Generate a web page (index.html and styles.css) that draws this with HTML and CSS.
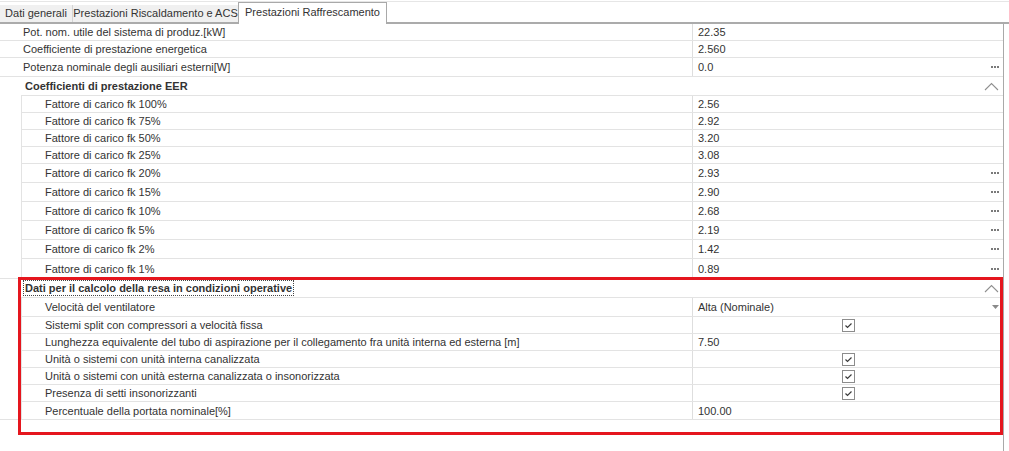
FILE: index.html
```html
<!DOCTYPE html>
<html lang="it">
<head>
    <meta charset="UTF-8">
    <title>Prestazioni Raffrescamento</title>
    <link rel="stylesheet" href="styles.css">
</head>
<body>

<div class="topline"></div>
<div class="tabs">
    <div class="tab tab-general">Dati generali</div>
    <div class="tab tab-heat">Prestazioni Riscaldamento e ACS</div>
    <div class="tab active">Prestazioni Raffrescamento</div>
</div>

<div class="grid">
    <div class="row"><div class="name">Pot. nom. utile del sistema di produz.[kW]</div><div class="value">22.35</div></div>
    <div class="row"><div class="name">Coefficiente di prestazione energetica</div><div class="value">2.560</div></div>
    <div class="row tall"><div class="name">Potenza nominale degli ausiliari esterni[W]</div><div class="value">0.0<svg class="dots" width="8" height="2"><rect x="0" y="0" width="2" height="2"/><rect x="3" y="0" width="2" height="2"/><rect x="6" y="0" width="2" height="2"/></svg></div></div>

    <div class="cat">
        <div class="cat-head">
            <span>Coefficienti di prestazione EER</span>
            <svg class="chevron" width="15" height="9" viewBox="0 0 15 9"><polyline points="1,8 7.5,1.5 14,8"/></svg>
        </div>
        <div class="cat-body">
            <div class="row"><div class="name">Fattore di carico fk 100%</div><div class="value">2.56</div></div>
            <div class="row"><div class="name">Fattore di carico fk 75%</div><div class="value">2.92</div></div>
            <div class="row"><div class="name">Fattore di carico fk 50%</div><div class="value">3.20</div></div>
            <div class="row"><div class="name">Fattore di carico fk 25%</div><div class="value">3.08</div></div>
            <div class="row tall"><div class="name">Fattore di carico fk 20%</div><div class="value">2.93<svg class="dots" width="8" height="2"><rect x="0" y="0" width="2" height="2"/><rect x="3" y="0" width="2" height="2"/><rect x="6" y="0" width="2" height="2"/></svg></div></div>
            <div class="row tall"><div class="name">Fattore di carico fk 15%</div><div class="value">2.90<svg class="dots" width="8" height="2"><rect x="0" y="0" width="2" height="2"/><rect x="3" y="0" width="2" height="2"/><rect x="6" y="0" width="2" height="2"/></svg></div></div>
            <div class="row tall"><div class="name">Fattore di carico fk 10%</div><div class="value">2.68<svg class="dots" width="8" height="2"><rect x="0" y="0" width="2" height="2"/><rect x="3" y="0" width="2" height="2"/><rect x="6" y="0" width="2" height="2"/></svg></div></div>
            <div class="row tall"><div class="name">Fattore di carico fk 5%</div><div class="value">2.19<svg class="dots" width="8" height="2"><rect x="0" y="0" width="2" height="2"/><rect x="3" y="0" width="2" height="2"/><rect x="6" y="0" width="2" height="2"/></svg></div></div>
            <div class="row tall"><div class="name">Fattore di carico fk 2%</div><div class="value">1.42<svg class="dots" width="8" height="2"><rect x="0" y="0" width="2" height="2"/><rect x="3" y="0" width="2" height="2"/><rect x="6" y="0" width="2" height="2"/></svg></div></div>
            <div class="row tall"><div class="name">Fattore di carico fk 1%</div><div class="value">0.89<svg class="dots" width="8" height="2"><rect x="0" y="0" width="2" height="2"/><rect x="3" y="0" width="2" height="2"/><rect x="6" y="0" width="2" height="2"/></svg></div></div>
        </div>
    </div>

    <div class="cat">
        <div class="cat-head">
            <span class="focus">Dati per il calcolo della resa in condizioni operative</span>
            <svg class="chevron" width="15" height="9" viewBox="0 0 15 9"><polyline points="1,8 7.5,1.5 14,8"/></svg>
        </div>
        <div class="cat-body">
            <div class="row tall"><div class="name">Velocità del ventilatore</div><div class="value">Alta (Nominale)<svg class="drop" width="7" height="4" viewBox="0 0 7 4"><polygon points="0,0 7,0 3.5,4"/></svg></div></div>
            <div class="row"><div class="name">Sistemi split con compressori a velocità fissa</div><div class="value center"><svg class="check" width="13" height="13" viewBox="0 0 13 13"><rect x="0.5" y="0.5" width="12" height="12"/><polyline points="3.5,6.5 5.5,8.5 9.5,4.5"/></svg></div></div>
            <div class="row"><div class="name">Lunghezza equivalente del tubo di aspirazione per il collegamento fra unità interna ed esterna [m]</div><div class="value">7.50</div></div>
            <div class="row"><div class="name">Unità o sistemi con unità interna canalizzata</div><div class="value center"><svg class="check" width="13" height="13" viewBox="0 0 13 13"><rect x="0.5" y="0.5" width="12" height="12"/><polyline points="3.5,6.5 5.5,8.5 9.5,4.5"/></svg></div></div>
            <div class="row"><div class="name">Unità o sistemi con unità esterna canalizzata o insonorizzata</div><div class="value center"><svg class="check" width="13" height="13" viewBox="0 0 13 13"><rect x="0.5" y="0.5" width="12" height="12"/><polyline points="3.5,6.5 5.5,8.5 9.5,4.5"/></svg></div></div>
            <div class="row"><div class="name">Presenza di setti insonorizzanti</div><div class="value center"><svg class="check" width="13" height="13" viewBox="0 0 13 13"><rect x="0.5" y="0.5" width="12" height="12"/><polyline points="3.5,6.5 5.5,8.5 9.5,4.5"/></svg></div></div>
            <div class="row"><div class="name">Percentuale della portata nominale[%]</div><div class="value">100.00</div></div>
        </div>
    </div>
</div>

<!-- riquadro rosso di evidenziazione -->
<div class="highlight"></div>

</body>
</html>
```

FILE: styles.css
```css
* {
    box-sizing: border-box;
}

body {
    margin: 0;
    font-family: "Liberation Sans", Arial, sans-serif;
    font-size: 11px;
    color: #333;
    background: #fff;
    overflow: hidden;
    position: relative;
}

.topline {
    height: 1px;
    margin-top: 1px;
    background: #e6e6e6;
}

/* linguette */
.tabs {
    display: flex;
    align-items: flex-end;
    height: 22px;
    border-bottom: 2px solid #ababab;
}

.tab {
    height: 17px;
    line-height: 17px;
    background: #f0f0f0;
    border-right: 1px solid #d4d4d4;
    text-align: center;
    white-space: nowrap;
}

.tab-general {
    width: 73px;
}

.tab-heat {
    width: 165px;
    border-right: none;
}

.tab.active {
    width: 149px;
    height: 22px;
    line-height: 19px;
    margin-bottom: -2px;
    background: #fff;
    border: 1px solid #a9a9a9;
    border-bottom: none;
}

/* griglia proprietà */
.grid {
    width: 1004px;
    height: 427px;
    border-right: 1px solid #a9a9a9;
}

.row {
    display: flex;
    height: 17px;
    border-bottom: 1px solid #e3e3e3;
}

.row.tall {
    height: 19px;
}

.name {
    flex: 1;
    display: flex;
    align-items: center;
    padding-left: 23px;
    white-space: nowrap;
    overflow: hidden;
}

.value {
    width: 311px;
    display: flex;
    align-items: center;
    justify-content: space-between;
    padding: 0 3px 0 5px;
    border-left: 1px solid #dedede;
    white-space: nowrap;
}

.value.center {
    justify-content: center;
    padding: 0;
}

.dots {
    fill: #7a7a7a;
    margin-right: 1px;
}

.drop {
    fill: #8a8a8a;
    margin-right: 1px;
}

.check rect {
    fill: #fff;
    stroke: #8c8c8c;
}

.check polyline {
    fill: none;
    stroke: #3c3c3c;
    stroke-width: 1.2;
}

.cat {
    border-bottom: 1px solid #e3e3e3;
}

.cat-head {
    height: 18px;
    display: flex;
    align-items: center;
    justify-content: space-between;
    padding: 0 4px 0 25px;
    font-weight: bold;
    white-space: nowrap;
}

.chevron polyline {
    fill: none;
    stroke: #8f8f8f;
    stroke-width: 1.1;
}

.focus {
    outline: 1px dotted #444;
    outline-offset: 1px;
}

.cat-body {
    margin-left: 21px;
    border-left: 1px solid #e3e3e3;
    border-top: 1px solid #e3e3e3;
}

.cat-body .row:last-child {
    border-bottom: none;
}

.highlight {
    position: absolute;
    left: 18px;
    top: 277px;
    width: 985px;
    height: 158px;
    border: 3px solid #e5161e;
}
```
